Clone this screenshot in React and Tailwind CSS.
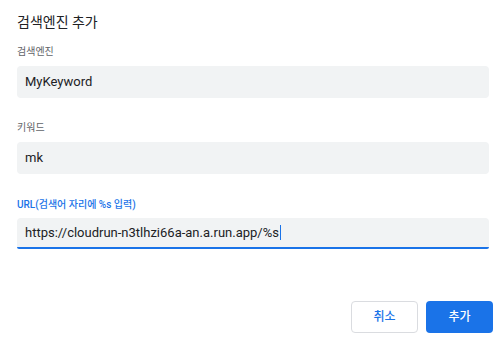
export default function App() {
  return (
    <div
      className="w-[500px] h-[339px] bg-white flex flex-col px-[17px]"
      style={{ fontFamily: 'Roboto, "Noto Sans CJK KR", sans-serif' }}
    >
      <h1 className="mt-[12px] h-[20px] leading-[20px] text-[14px] text-[#202124]">검색엔진 추가</h1>

      <label className="mt-[13px] h-[14px] leading-[14px] text-[10px] text-[#5f6368]">검색엔진</label>
      <div className="mt-[7px] w-[472px] h-[32px] rounded-[4px] bg-[#f1f3f4] px-[8px] flex items-center text-[13px] text-[#202124]">
        MyKeyword
      </div>

      <label className="mt-[23px] h-[14px] leading-[14px] text-[10px] text-[#5f6368]">키워드</label>
      <div className="mt-[7px] w-[472px] h-[32px] rounded-[4px] bg-[#f1f3f4] px-[8px] flex items-center text-[13px] text-[#202124]">
        mk
      </div>

      <label className="mt-[24px] h-[14px] leading-[14px] text-[10px] font-medium text-[#1a73e8]">
        URL(검색어 자리에 %s 입력)
      </label>
      <div className="mt-[6px] w-[472px] h-[31px] rounded-t-[4px] rounded-b-[2px] bg-[#f1f3f4] border-b-2 border-[#1a73e8] px-[8px] flex items-center text-[13px] text-[#202124]">
        https://cloudrun-n3tlhzi66a-an.a.run.app/%s
        <span className="ml-[1px] w-px h-[15px] bg-[#1a73e8]" />
      </div>

      <div className="mt-[52px] flex justify-end gap-[8px] pr-[7px] -mr-[17px]">
        <button className="w-[67px] h-[32px] rounded-[4px] border border-[#dadce0] bg-white text-[12px] font-medium text-[#1a73e8]">
          취소
        </button>
        <button className="w-[67px] h-[32px] rounded-[4px] bg-[#1a73e8] text-[12px] font-medium text-white">
          추가
        </button>
      </div>
    </div>
  );
}
